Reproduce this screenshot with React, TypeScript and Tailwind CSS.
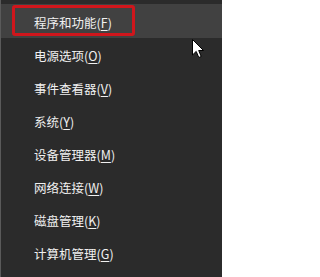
const items = [
  { label: "电源选项", key: "O" },
  { label: "事件查看器", key: "V" },
  { label: "系统", key: "Y" },
  { label: "设备管理器", key: "M" },
  { label: "网络连接", key: "W" },
  { label: "磁盘管理", key: "K" },
  { label: "计算机管理", key: "G" },
];

const Label = ({ label, k }: { label: string; k: string }) => (
  <span>
    {label}(<span className="underline underline-offset-[2px] decoration-1">{k}</span>)
  </span>
);

const App = () => {
  return (
    <div
      className="relative w-[222px] h-[277px] overflow-hidden bg-[#2b2b2b] border-l border-[#5a5a5a] text-[12.5px] text-[#f0f0f0]"
      style={{ fontFamily: '"Noto Sans CJK SC", "Noto Sans", sans-serif' }}
    >
      <div className="pt-[4px]">
        {/* highlighted row */}
        <div className="h-[34px] bg-[#414141] flex items-center pl-[33px] pt-[4px]">
          <Label label="程序和功能" k="F" />
        </div>
        <div className="mt-[2px] flex flex-col">
          {items.map((item) => (
            <div key={item.key} className="h-[33px] flex items-center pl-[33px]">
              <Label label={item.label} k={item.key} />
            </div>
          ))}
        </div>
      </div>

      {/* red annotation box */}
      <div className="absolute left-[11px] top-[5px] w-[123px] h-[31px] border-[3px] border-[#d0161c] rounded-[3px]" />

      {/* mouse cursor */}
      <svg className="absolute left-[191px] top-[39px]" width="13" height="20" viewBox="0 0 13 20">
        <path d="M0.5 0.5 L0.5 16 L4.2 12.4 L6.8 18.5 L9.2 17.5 L6.7 11.5 L11.5 11.5 Z" fill="#fff" stroke="#000" strokeWidth="1" />
      </svg>
    </div>
  );
};

export default App;
